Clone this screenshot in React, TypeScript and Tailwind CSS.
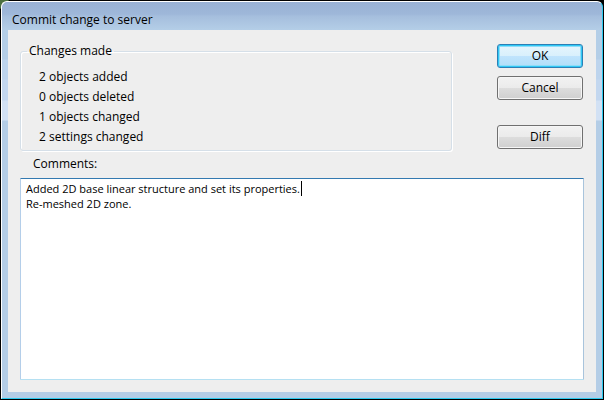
import { useState } from "react";
import clsx from "clsx";

const changes = [
  "2 objects added",
  "0 objects deleted",
  "1 objects changed",
  "2 settings changed",
];

const initialComment =
  "Added 2D base linear structure and set its properties.\nRe-meshed 2D zone.";

type DialogButtonProps = {
  label: string;
  primary?: boolean;
};

function DialogButton({ label, primary }: DialogButtonProps) {
  return (
    <button
      type="button"
      className={clsx(
        "h-6 w-full rounded-[3px] border text-center leading-4",
        primary
          ? "border-[#2c7fb5] bg-[linear-gradient(#e6f5fd_0%,#d9f0fc_48%,#c0e4fd_50%,#b0def8_100%)] shadow-[inset_0_0_0_1px_#2fc8f5,inset_0_0_0_2px_#8fdcf8]"
          : "border-[#707070] bg-[linear-gradient(#f2f2f2_0%,#ebebeb_48%,#dddddd_50%,#cfcfcf_100%)] shadow-[inset_0_0_0_1px_#f6f6f6]"
      )}
    >
      {label}
    </button>
  );
}

export default function App() {
  const [comment, setComment] = useState(initialComment);

  return (
    <div className="flex min-h-screen bg-black bg-[linear-gradient(135deg,#4b7040_0px,#4b7040_6px,#000_7px)] p-px font-['Open_Sans','Noto_Sans',sans-serif] text-[12px] leading-4 text-black">
      {/* Glass frame */}
      <div className="flex flex-1 flex-col rounded-t-[6px] border border-t-white border-r-[#2cc9ee] border-b-[#2cc9ee] border-l-white bg-[#b4cde6] bg-[linear-gradient(#99b1d5_0px,#9eb7d9_12px,#a5bedd_14px,#b4cee7_28px,#b4cee7_57px,#bdd4ed_58px,#bdd4ed_77px,#c3d7ef_78px,#c3d7ef_98px,#d2e1f4_99px,#d2e1f4_118px,#b4cde6_119px)] px-1.5 pb-1.5">
        <header className="flex h-7 items-center px-1 pt-2">
          <h1>Commit change to server</h1>
        </header>

        <main className="flex flex-1 flex-col bg-[#eeeeee] px-3 pt-[13px] pb-3">
          <div className="flex">
            <fieldset className="mr-[45px] h-[108px] flex-1 rounded-[3px] border border-[#d5dfe8] px-4 shadow-[1px_1px_0_#fff,inset_1px_1px_0_#fff]">
              <legend className="-ml-2.5 px-0.5">Changes made</legend>
              <ul className="pt-2.5 pl-0.5">
                {changes.map((change) => (
                  <li key={change} className="h-5">
                    {change}
                  </li>
                ))}
              </ul>
            </fieldset>

            <div className="mt-px mr-px flex w-[86px] flex-col">
              <DialogButton label="OK" primary />
              <div className="mt-2 mb-[25px]">
                <DialogButton label="Cancel" />
              </div>
              <DialogButton label="Diff" />
            </div>
          </div>

          <label htmlFor="comments" className="mt-[5px] mb-1.5 pl-[13px]">
            Comments:
          </label>
          <div className="relative flex flex-1">
            <textarea
              id="comments"
              value={comment}
              onChange={(e) => setComment(e.target.value)}
              spellCheck={false}
              className="flex-1 resize-none rounded-[1px] border border-t-[#3379b0] border-r-[#a9c4dc] border-b-[#b5e0f2] border-l-[#b4cee9] bg-white px-[5px] py-0.5 text-[11px] leading-[15px] outline-none"
            />
            {/* Text cursor */}
            <span className="absolute top-[3px] left-[281px] h-[15px] w-px bg-black" />
          </div>
        </main>
      </div>
    </div>
  );
}
